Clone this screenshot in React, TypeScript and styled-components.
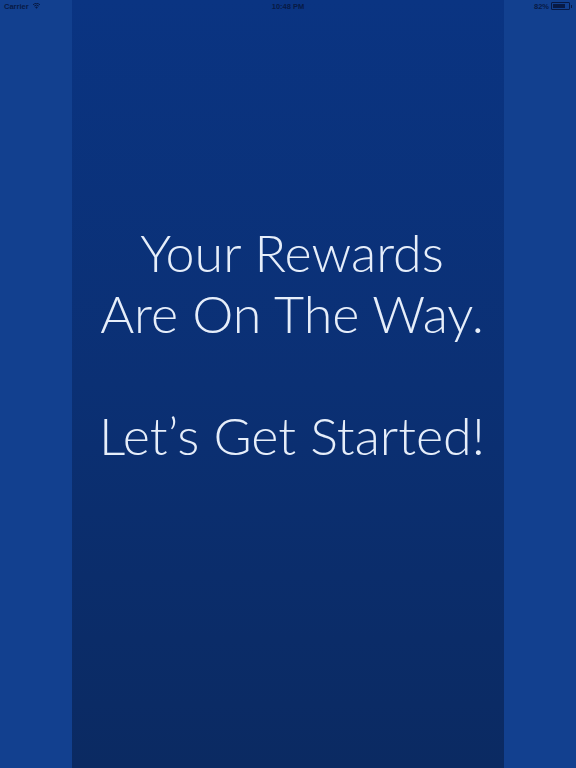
import * as React from "react";
import styled, { createGlobalStyle } from "styled-components";

const GlobalStyle = createGlobalStyle`
  html, body {
    margin: 0;
    padding: 0;
    width: 576px;
    height: 768px;
    overflow: hidden;
  }
  body {
    font-family: "Lato", "Open Sans", sans-serif;
  }
`;

const ink = "#081a45";

const Screen = styled.div`
  position: relative;
  display: flex;
  width: 576px;
  height: 768px;
  background: #12408f;
`;

const Side = styled.div`
  flex: 0 0 72px;
  background: #12408f;
`;

const Panel = styled.div`
  flex: 0 0 432px;
  display: flex;
  flex-direction: column;
  align-items: center;
  padding: 222px 0 0 8px;
  box-sizing: border-box;
  background: linear-gradient(180deg, #0a3482 0%, #0b3074 50%, #0b2a62 100%);
`;

const Headline = styled.p<{ gap?: number }>`
  margin: ${(p) => p.gap ?? 0}px 0 0;
  color: #e6eefa;
  font-family: "Lato", sans-serif;
  font-weight: 300;
  font-size: 52px;
  line-height: 61px;
  text-align: center;
  white-space: nowrap;
`;

const StatusBar = styled.div`
  position: absolute;
  top: 0;
  left: 0;
  right: 0;
  height: 12px;
  display: grid;
  grid-template-columns: 1fr auto 1fr;
  align-items: center;
  padding: 0 4px;
  font-family: "Liberation Sans", Arial, sans-serif;
  font-size: 7.5px;
  font-weight: 700;
  color: ${ink};
`;

const Left = styled.div`
  display: flex;
  align-items: center;
  gap: 3px;
`;

const Center = styled.div``;

const Right = styled.div`
  display: flex;
  align-items: center;
  justify-content: flex-end;
  gap: 2px;
`;

const Battery = styled.div`
  display: flex;
  align-items: center;
`;

const BatteryBody = styled.div`
  width: 15px;
  height: 4px;
  border: 1px solid ${ink};
  border-radius: 1px;
  padding: 1px;
  box-sizing: content-box;
  display: flex;
`;

const BatteryFill = styled.div`
  background: ${ink};
  height: 100%;
`;

const BatteryTip = styled.div`
  width: 1px;
  height: 3px;
  background: ${ink};
  margin-left: 1px;
`;

const Wifi = () => (
  <svg width="9" height="6" viewBox="0 0 16 12">
    <path d="M8 11.5 L5.3 8.4 A3.8 3.8 0 0 1 10.7 8.4 Z" fill={ink} />
    <path d="M3.4 6.2 A6.6 6.6 0 0 1 12.6 6.2" stroke={ink} strokeWidth="2" fill="none" />
    <path d="M1 3.6 A10 10 0 0 1 15 3.6" stroke={ink} strokeWidth="2" fill="none" />
  </svg>
);

export default function App() {
  const level = 82;
  return (
    <>
      <GlobalStyle />
      <Screen>
        <Side />
        <Panel>
          <Headline>
            Your Rewards
            <br />
            Are On The Way.
          </Headline>
          <Headline gap={61}>Let’s Get Started!</Headline>
        </Panel>
        <Side />
        <StatusBar>
          <Left>
            <span>Carrier</span>
            <Wifi />
          </Left>
          <Center>10:48 PM</Center>
          <Right>
            <span>{level}%</span>
            <Battery>
              <BatteryBody>
                <BatteryFill style={{ width: `${level}%` }} />
              </BatteryBody>
              <BatteryTip />
            </Battery>
          </Right>
        </StatusBar>
      </Screen>
    </>
  );
}
